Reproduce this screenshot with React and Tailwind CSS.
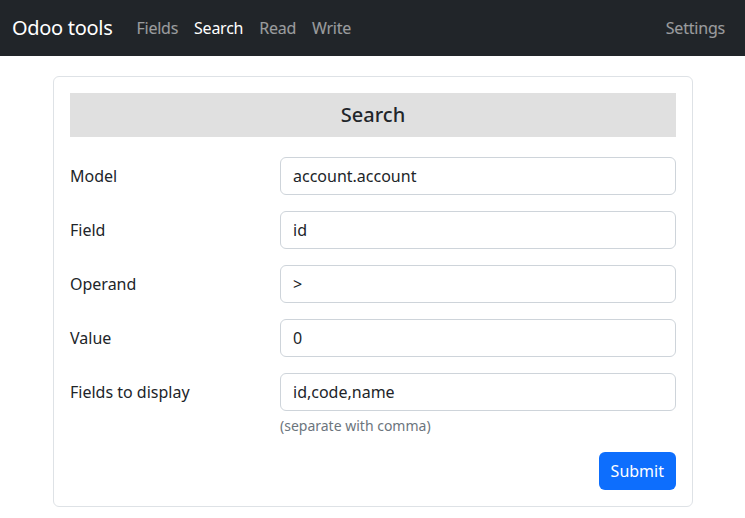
export default function App() {
  const rows = [
    { label: "Model", value: "account.account" },
    { label: "Field", value: "id" },
    { label: "Operand", value: ">" },
    { label: "Value", value: "0" },
    { label: "Fields to display", value: "id,code,name", help: "(separate with comma)" },
  ];

  return (
    <div className="min-h-[518px] bg-white font-['Noto_Sans',sans-serif] text-[#212529]">
      <nav className="flex h-14 items-center bg-[#212529] px-3">
        <span className="mr-4 text-[20px] tracking-[-0.3px] text-white">Odoo tools</span>
        <div className="flex items-center text-[16px] tracking-[-0.25px]">
          <span className="px-2 text-white/55">Fields</span>
          <span className="px-2 text-white">Search</span>
          <span className="px-2 text-white/55">Read</span>
          <span className="px-2 text-white/55">Write</span>
        </div>
        <span className="ml-auto px-2 text-[16px] tracking-[-0.2px] text-white/55">Settings</span>
      </nav>

      <div className="ml-[53px] mt-5 w-[640px] rounded-md border border-[#dee2e6] p-4">
        <div className="flex h-11 items-center justify-center bg-[#e0e0e0] text-[20px] font-medium">Search</div>
        <div className="mt-5 flex flex-col gap-4">
          {rows.map((row) => (
            <div key={row.label} className="flex">
              <div className="flex h-[38px] w-[210px] items-center text-[16px]">{row.label}</div>
              <div className="flex-1">
                <div className="flex h-[38px] items-center rounded-md border border-[#ced4da] px-3 text-[16px]">
                  {row.value}
                </div>
                {row.help ? <div className="mt-1 text-[14px] leading-[21px] text-[#6c757d]">{row.help}</div> : null}
              </div>
            </div>
          ))}
        </div>
        <div className="mt-4 flex justify-end">
          <button type="button" className="h-[38px] rounded-md bg-[#0d6efd] px-3 text-[16px] text-white">
            Submit
          </button>
        </div>
      </div>
    </div>
  );
}
